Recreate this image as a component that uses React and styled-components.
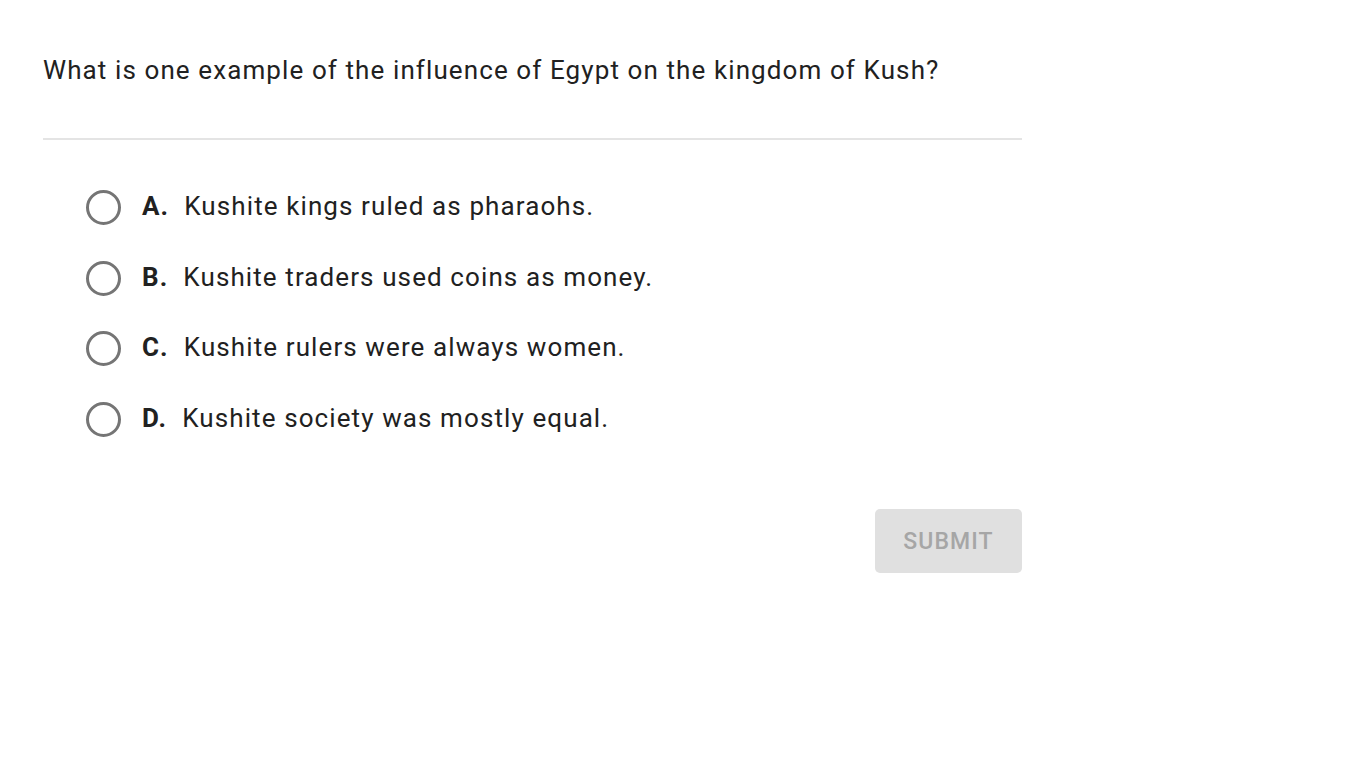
import React from 'react'
import styled, { createGlobalStyle } from 'styled-components'

const GlobalStyle = createGlobalStyle`
  body {
    margin: 0;
    background: #fff;
    font-family: Roboto, "Liberation Sans", sans-serif;
  }
`

const Page = styled.div`
  width: 979px;
  padding: 50px 0 0 43px;
`

const Question = styled.h1`
  margin: 0;
  font-size: 26px;
  font-weight: 400;
  line-height: 40px;
  letter-spacing: 1.1px;
  color: #212121;
`

const Divider = styled.hr`
  margin: 48px 0 0;
  border: none;
  border-top: 2px solid #e4e4e4;
`

const Choices = styled.div`
  display: flex;
  flex-direction: column;
  gap: 34.7px;
  margin-top: 48px;
  padding-left: 43px;
`

const Choice = styled.label`
  display: flex;
  align-items: center;
  height: 36px;
  font-size: 26px;
  letter-spacing: 1.1px;
  color: #212121;
  cursor: pointer;
`

const Radio = styled.span`
  width: 29px;
  height: 29px;
  border: 3px solid #757575;
  border-radius: 50%;
  margin-right: 21px;
  margin-top: 3px;
  flex-shrink: 0;
`

const Letter = styled.b`
  font-weight: 700;
  margin-right: 15px;
`

const Footer = styled.div`
  display: flex;
  justify-content: flex-end;
  margin-top: 73px;
`

const SubmitButton = styled.button`
  width: 147px;
  height: 64px;
  border: none;
  border-radius: 5px;
  background: #e0e0e0;
  color: #a6a6a6;
  font-family: inherit;
  font-size: 23px;
  font-weight: 500;
  letter-spacing: 1.1px;
`

const choices = [
  ['A.', 'Kushite kings ruled as pharaohs.'],
  ['B.', 'Kushite traders used coins as money.'],
  ['C.', 'Kushite rulers were always women.'],
  ['D.', 'Kushite society was mostly equal.'],
]

export default function App() {
  return (
    <Page>
      <GlobalStyle />
      <Question>What is one example of the influence of Egypt on the kingdom of Kush?</Question>
      <Divider />
      <Choices>
        {choices.map(([letter, text]) => (
          <Choice key={letter}>
            <Radio />
            <Letter>{letter}</Letter>
            {text}
          </Choice>
        ))}
      </Choices>
      <Footer>
        <SubmitButton disabled>SUBMIT</SubmitButton>
      </Footer>
    </Page>
  )
}
